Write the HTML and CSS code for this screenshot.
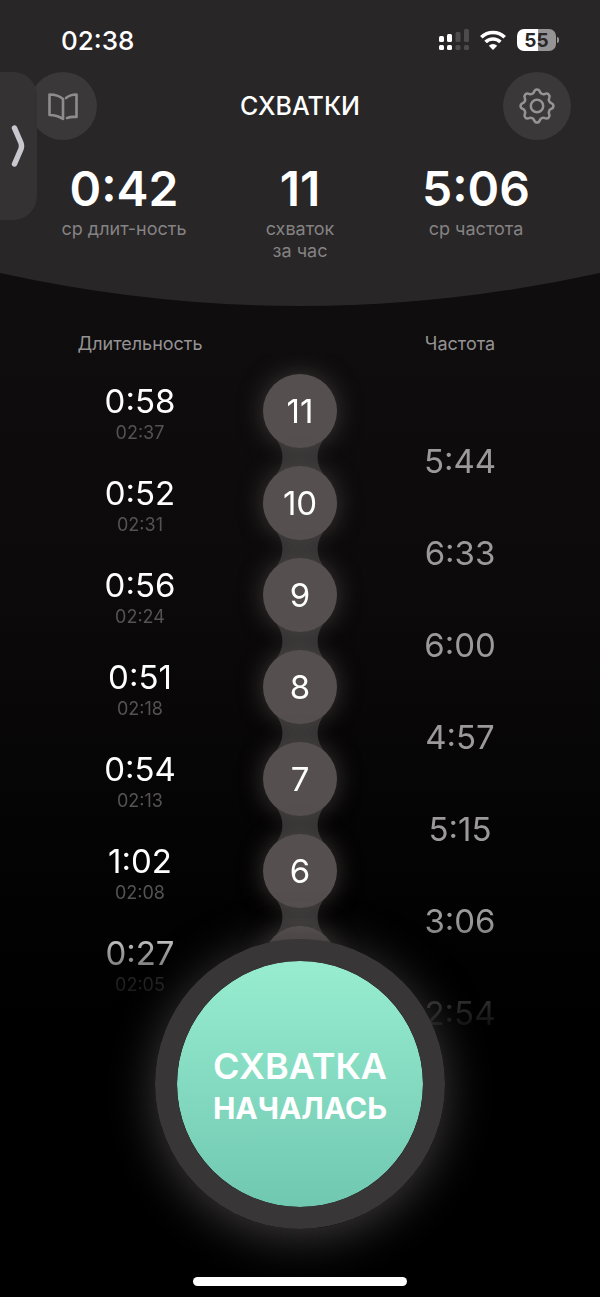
FILE: index.html
```html
<!DOCTYPE html>
<html lang="ru">
<head>
<meta charset="utf-8">
<meta name="viewport" content="width=device-width, initial-scale=1">
<title>Схватки</title>
<link rel="stylesheet" href="styles.css">
</head>
<body>
<header class="header">
  <div class="status">
    <time class="clock">02:38</time>
    <div class="status-icons">
      <svg class="signal" width="30" height="22" viewBox="0 0 30 22">
        <g fill="#fff">
          <rect x="0" y="7" width="5" height="6" rx="1.5"/>
          <rect x="8" y="5" width="5" height="8" rx="1.5"/>
          <rect x="0" y="16" width="5" height="5" rx="1.5"/>
          <rect x="8" y="16" width="5" height="5" rx="1.5"/>
        </g>
        <g fill="#4d4b4c">
          <rect x="16.5" y="3" width="5" height="10" rx="1.5"/>
          <rect x="25" y="0" width="5" height="13" rx="1.5"/>
          <rect x="16.5" y="16" width="5" height="5" rx="1.5"/>
          <rect x="25" y="16" width="5" height="5" rx="1.5"/>
        </g>
      </svg>
      <svg class="wifi" width="26" height="20" viewBox="0 0 26 20">
        <g fill="none" stroke="#fff" stroke-width="3.6">
          <path d="M1.3 7.2A16.8 16.8 0 0 1 24.7 7.2"/>
          <path d="M5.6 12A10.6 10.6 0 0 1 20.4 12"/>
        </g>
        <path d="M13 20L8.8 15.7A6 6 0 0 1 17.2 15.7Z" fill="#fff"/>
      </svg>
      <div class="battery"><span>55</span></div>
    </div>
  </div>
  <div class="topbar">
    <button class="round-btn" type="button" aria-label="Справка">
      <svg width="30" height="29" viewBox="48 92 30 29" fill="none" stroke="#8f8c8d" stroke-width="2.6" stroke-linejoin="round" stroke-linecap="round">
        <path d="M63 119V99Q58 94.5 49.5 94.5V115Q57 115 63 119"/>
        <path d="M66 98Q70 94.5 76.5 94.5V117Q71 116.5 67 118"/>
      </svg>
    </button>
    <h1>СХВАТКИ</h1>
    <button class="round-btn" type="button" aria-label="Настройки">
      <svg width="38" height="38" viewBox="-19 -19 38 38" fill="none" stroke="#959394" stroke-width="2.5" stroke-linejoin="round">
        <path d="M-2.9-14.2C-1.8-17.2 1.8-17.2 2.9-14.2C3.6-12.3 5.9-11.2 8-12.2C10.9-13.4 13.4-10.9 12.2-8C11.2-5.9 12.3-3.6 14.2-2.9C17.2-1.8 17.2 1.8 14.2 2.9C12.3 3.6 11.2 5.9 12.2 8C13.4 10.9 10.9 13.4 8 12.2C5.9 11.2 3.6 12.3 2.9 14.2C1.8 17.2-1.8 17.2-2.9 14.2C-3.6 12.3-5.9 11.2-8 12.2C-10.9 13.4-13.4 10.9-12.2 8C-11.2 5.9-12.3 3.6-14.2 2.9C-17.2 1.8-17.2-1.8-14.2-2.9C-12.3-3.6-11.2-5.9-12.2-8C-13.4-10.9-10.9-13.4-8-12.2C-5.9-11.2-3.6-12.3-2.9-14.2Z"/>
        <circle r="6.2"/>
      </svg>
    </button>
  </div>
  <dl class="stats">
    <div><dd>0:42</dd><dt>ср длит-ность</dt></div>
    <div><dd>11</dd><dt>схваток<br>за час</dt></div>
    <div><dd>5:06</dd><dt>ср частота</dt></div>
  </dl>
  <button class="side-tab" type="button" aria-label="Открыть панель">
    <svg width="14" height="42" viewBox="0 0 14 42" fill="none" stroke="#c9c8cf" stroke-width="5.5" stroke-linecap="round" stroke-linejoin="round">
      <path d="M3.5 3L10 18Q11 21 10 24L3.5 39"/>
    </svg>
  </button>
</header>
<svg class="curve" viewBox="0 0 600 33" preserveAspectRatio="none"><path d="M0 0Q300 66 600 0Z" fill="#282627"/></svg>

<main>
  <table class="log">
    <thead>
      <tr><th>Длительность</th><th></th><th>Частота</th></tr>
    </thead>
    <tbody>
      <tr>
        <td class="length">0:58<small>02:37</small></td>
        <td class="num"><span>11</span><svg viewBox="0 0 52 40"><path d="M0 0A28 28 0 0 1 0 40H52A28 28 0 0 1 52 0Z"/></svg></td>
        <td class="freq">5:44</td>
      </tr>
      <tr>
        <td class="length">0:52<small>02:31</small></td>
        <td class="num"><span>10</span><svg viewBox="0 0 52 40"><path d="M0 0A28 28 0 0 1 0 40H52A28 28 0 0 1 52 0Z"/></svg></td>
        <td class="freq">6:33</td>
      </tr>
      <tr>
        <td class="length">0:56<small>02:24</small></td>
        <td class="num"><span>9</span><svg viewBox="0 0 52 40"><path d="M0 0A28 28 0 0 1 0 40H52A28 28 0 0 1 52 0Z"/></svg></td>
        <td class="freq">6:00</td>
      </tr>
      <tr>
        <td class="length">0:51<small>02:18</small></td>
        <td class="num"><span>8</span><svg viewBox="0 0 52 40"><path d="M0 0A28 28 0 0 1 0 40H52A28 28 0 0 1 52 0Z"/></svg></td>
        <td class="freq">4:57</td>
      </tr>
      <tr>
        <td class="length">0:54<small>02:13</small></td>
        <td class="num"><span>7</span><svg viewBox="0 0 52 40"><path d="M0 0A28 28 0 0 1 0 40H52A28 28 0 0 1 52 0Z"/></svg></td>
        <td class="freq">5:15</td>
      </tr>
      <tr>
        <td class="length">1:02<small>02:08</small></td>
        <td class="num"><span>6</span><svg viewBox="0 0 52 40"><path d="M0 0A28 28 0 0 1 0 40H52A28 28 0 0 1 52 0Z"/></svg></td>
        <td class="freq">3:06</td>
      </tr>
      <tr>
        <td class="length">0:27<small>02:05</small></td>
        <td class="num"><span></span></td>
        <td class="freq">2:54</td>
      </tr>
    </tbody>
  </table>
</main>

<footer class="footer">
  <button class="start" type="button"><b>СХВАТКА</b>НАЧАЛАСЬ</button>
  <div class="home-bar"></div>
</footer>
</body>
</html>
```
FILE: styles.css
```css
* {
  box-sizing: border-box;
}
body {
  margin: 0;
  min-height: 100vh;
  display: flex;
  flex-direction: column;
  background: linear-gradient(#0f0d0e 24%, #0c0a0b 45%, #000 78%);
  color: #fff;
  font-family: Inter, "Liberation Sans", sans-serif;
}
button {
  border: 0;
  padding: 0;
  color: inherit;
  font-family: inherit;
  cursor: pointer;
}

/* header */
.header {
  position: relative;
  background: #282627;
  padding-bottom: 11px;
}
.status {
  display: flex;
  justify-content: space-between;
  align-items: center;
  height: 72px;
  padding: 8px 40px 0 61px;
}
.clock {
  font-size: 26px;
  font-weight: 500;
}
.status-icons {
  display: flex;
  align-items: center;
  gap: 11px;
}
.battery {
  position: relative;
  width: 39px;
  height: 22px;
  margin-right: 4px;
  border-radius: 7px;
  background: linear-gradient(90deg, #fff 55%, #959394 55%);
  color: #282627;
  font-size: 19px;
  font-weight: 700;
  line-height: 23px;
  text-align: center;
}
.battery::after {
  content: "";
  position: absolute;
  right: -3px;
  top: 8px;
  width: 2px;
  height: 6px;
  border-radius: 0 2px 2px 0;
  background: #959394;
}
.topbar {
  display: flex;
  justify-content: space-between;
  align-items: center;
  padding: 0 29px;
}
.topbar h1 {
  margin: 0;
  font-size: 25px;
  font-weight: 500;
}
.round-btn {
  display: flex;
  align-items: center;
  justify-content: center;
  width: 68px;
  height: 68px;
  border-radius: 50%;
  background: #3a3839;
}
.stats {
  display: grid;
  grid-template-columns: repeat(3, 1fr);
  margin: 21px 0 0;
  padding: 0 36px;
  text-align: center;
}
.stats div {
  display: flex;
  flex-direction: column;
  gap: 1px;
}
.stats dd {
  margin: 0;
  font-size: 48px;
  font-weight: 600;
  line-height: 56px;
}
.stats dt {
  color: #858283;
  font-size: 18px;
  line-height: 22px;
}
.side-tab {
  position: absolute;
  left: 0;
  top: 72px;
  width: 37px;
  height: 148px;
  padding-left: 11px;
  border-radius: 0 24px 24px 0;
  background: #343233;
  text-align: left;
}
.side-tab svg {
  display: block;
}
.curve {
  display: block;
  width: 100%;
  height: 33px;
}

/* list of contractions */
.log {
  display: block;
  padding: 26px 60px 0;
  text-align: center;
}
.log thead,
.log tbody {
  display: block;
}
.log tr {
  display: grid;
  grid-template-columns: repeat(3, 1fr);
}
.log th {
  padding: 0 0 18px;
  color: #959394;
  font-size: 18px;
  font-weight: 400;
  line-height: 24px;
}
/* the side and top padding leaves room for the glow inside the mask */
.log tbody {
  margin: -20px -60px 0;
  padding: 20px 60px;
  -webkit-mask-image: linear-gradient(#000 calc(100% - 116px), rgba(0, 0, 0, 0.6) calc(100% - 85px), rgba(0, 0, 0, 0.2) calc(100% - 24px), transparent);
  mask-image: linear-gradient(#000 calc(100% - 116px), rgba(0, 0, 0, 0.6) calc(100% - 85px), rgba(0, 0, 0, 0.2) calc(100% - 24px), transparent);
}
.log tbody tr {
  height: 92px;
}
.log td {
  padding: 0;
  font-size: 33px;
  line-height: 40px;
}
.log .length {
  padding-top: 7px;
}
.log small {
  display: block;
  color: #555253;
  font-size: 18px;
  line-height: 24px;
}
.log .freq {
  padding-top: 67px;
  color: #9b999a;
}
.num {
  position: relative;
}
.num span {
  position: relative;
  z-index: 1;
  display: block;
  width: 74px;
  height: 74px;
  margin: 0 auto;
  border-radius: 50%;
  background: #55504f;
  box-shadow: 0 0 24px rgba(95, 88, 86, 0.6);
  line-height: 74px;
}
.num svg {
  position: absolute;
  left: calc(50% - 26px);
  top: 63px;
  width: 52px;
  height: 40px;
  fill: #323031;
}

/* start button */
.footer {
  position: relative;
  z-index: 2;
  display: flex;
  flex-direction: column;
  align-items: center;
  gap: 48px;
  margin-top: -99px;
  padding-bottom: 11px;
}
.start {
  width: 290px;
  height: 290px;
  padding-top: 4px;
  border: 22px solid #393637;
  border-radius: 50%;
  background: linear-gradient(#98edd0, #70c8b1) padding-box;
  box-shadow: 0 8px 48px rgba(125, 120, 120, 0.5);
  font-size: 30px;
  font-weight: 700;
  line-height: 40px;
}
.start b {
  display: block;
  font-size: 36px;
  font-weight: 600;
  line-height: 44px;
}
.home-bar {
  width: 214px;
  height: 9px;
  border-radius: 5px;
  background: #fff;
}
```
